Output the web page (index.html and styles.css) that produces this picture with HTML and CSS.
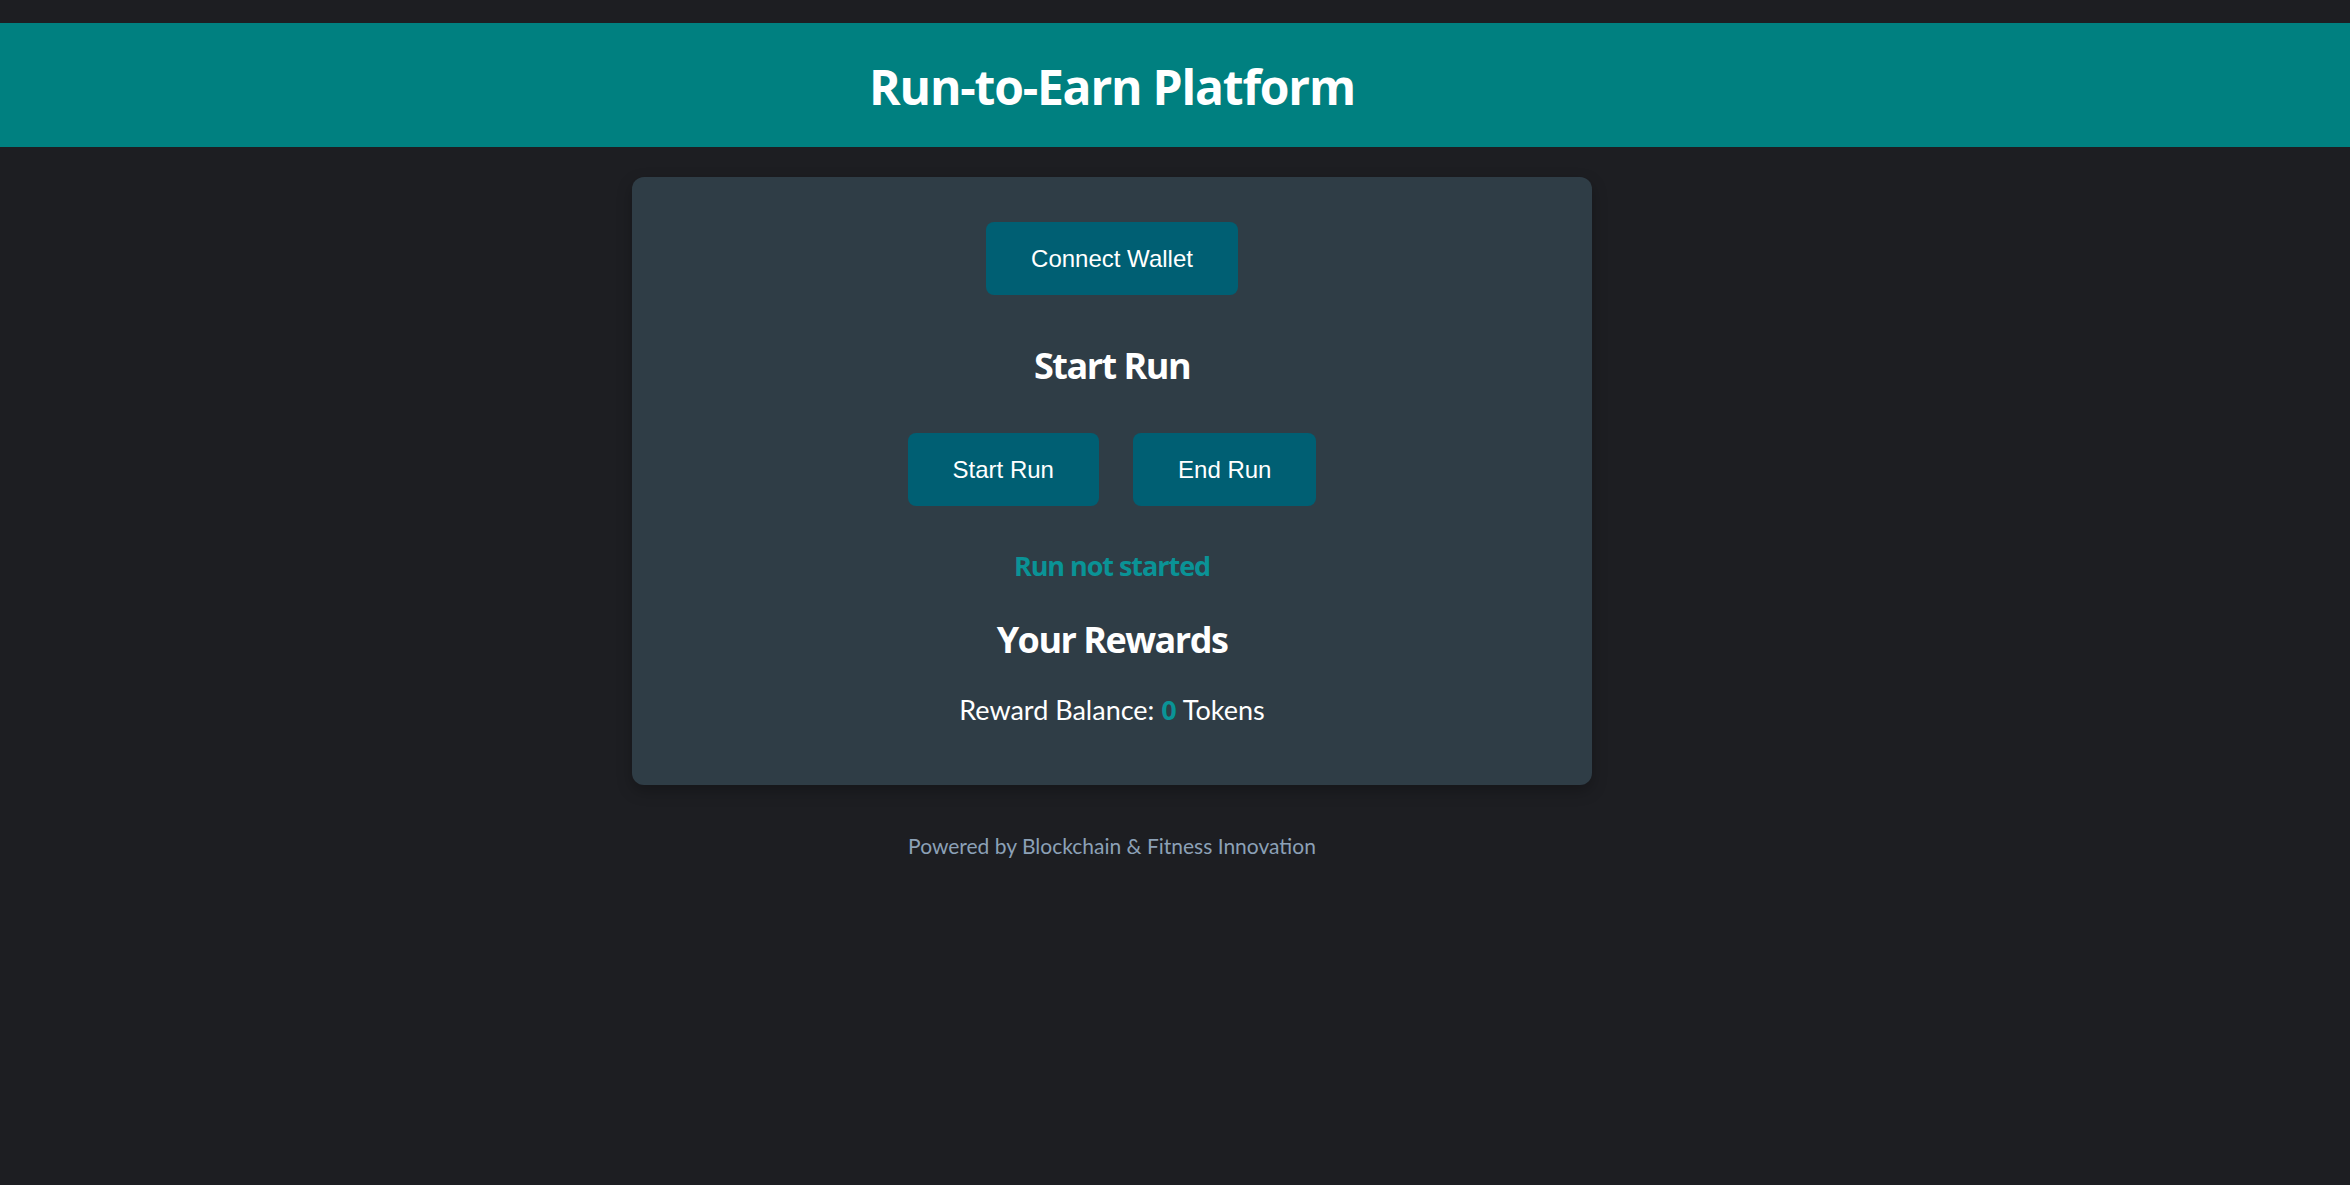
FILE: index.html
```html
<!DOCTYPE html>
<html lang="en">
<head>
<meta charset="utf-8">
<title>Run-to-Earn Platform</title>
<link rel="stylesheet" href="styles.css">
</head>
<body>
<header class="site-header">
  <div class="header-inner">
    <h1 class="site-title">Run-to-Earn Platform</h1>
  </div>
</header>
<main class="page">
  <section class="card">
    <div class="btn-row">
      <button class="btn" type="button">Connect Wallet</button>
    </div>
    <h2 class="section-title">Start Run</h2>
    <div class="btn-row">
      <button class="btn" type="button">Start Run</button>
      <button class="btn" type="button">End Run</button>
    </div>
    <p class="status">Run not started</p>
    <h2 class="section-title">Your Rewards</h2>
    <p class="balance">Reward Balance: <span class="amount">0</span> Tokens</p>
  </section>
  <footer class="footer">Powered by Blockchain &amp; Fitness Innovation</footer>
</main>
</body>
</html>
```

FILE: styles.css
```css
* { box-sizing: border-box; }
html, body { margin: 0; padding: 0; }
body {
  background: #1d1e22;
  color: #ffffff;
  font-family: "Lato", "Open Sans", sans-serif;
  padding-top: 23px;
  min-height: 1185px;
}
.site-header {
  background: #008080;
  height: 124px;
}
.header-inner {
  width: 2224px;
  height: 124px;
  padding-top: 4px;
  display: flex;
  align-items: center;
  justify-content: center;
}
.site-title {
  margin: 0;
  font-family: "Open Sans", "Noto Sans", sans-serif;
  font-size: 48px;
  font-weight: 700;
  letter-spacing: -1.2px;
  line-height: 64px;
  color: #ffffff;
}
.page {
  width: 2224px;
  padding-top: 30px;
}
.card {
  width: 960px;
  margin: 0 auto;
  background: #2f3d46;
  border-radius: 12px;
  padding: 30px;
  text-align: center;
  box-shadow: 0 6px 15px rgba(0, 0, 0, 0.25);
}
.btn-row { line-height: 0; }
.btn {
  display: inline-block;
  margin: 15px;
  padding: 0 45px;
  height: 73px;
  border: 0;
  border-radius: 8px;
  background: #005f73;
  color: #ffffff;
  font-family: "Liberation Sans", Arial, sans-serif;
  font-size: 24px;
  line-height: 73px;
  vertical-align: top;
}
.section-title {
  margin: 30px 0;
  padding-top: 4px;
  font-family: "Open Sans", "Noto Sans", sans-serif;
  font-size: 36px;
  font-weight: 700;
  letter-spacing: -1.5px;
  line-height: 44px;
}
.status {
  margin: 27px 0;
  font-family: "Open Sans", "Noto Sans", sans-serif;
  font-size: 27px;
  font-weight: 700;
  letter-spacing: -1.05px;
  line-height: 36px;
  color: #0a9396;
}
.balance {
  margin: 27px 0;
  font-size: 27px;
  line-height: 36px;
}
.amount {
  font-family: "Open Sans", "Noto Sans", sans-serif;
  color: #0a9396;
  font-weight: 700;
}
.footer {
  margin-top: 47px;
  text-align: center;
  font-size: 21px;
  line-height: 28px;
  color: #8ca1b7;
}
```
